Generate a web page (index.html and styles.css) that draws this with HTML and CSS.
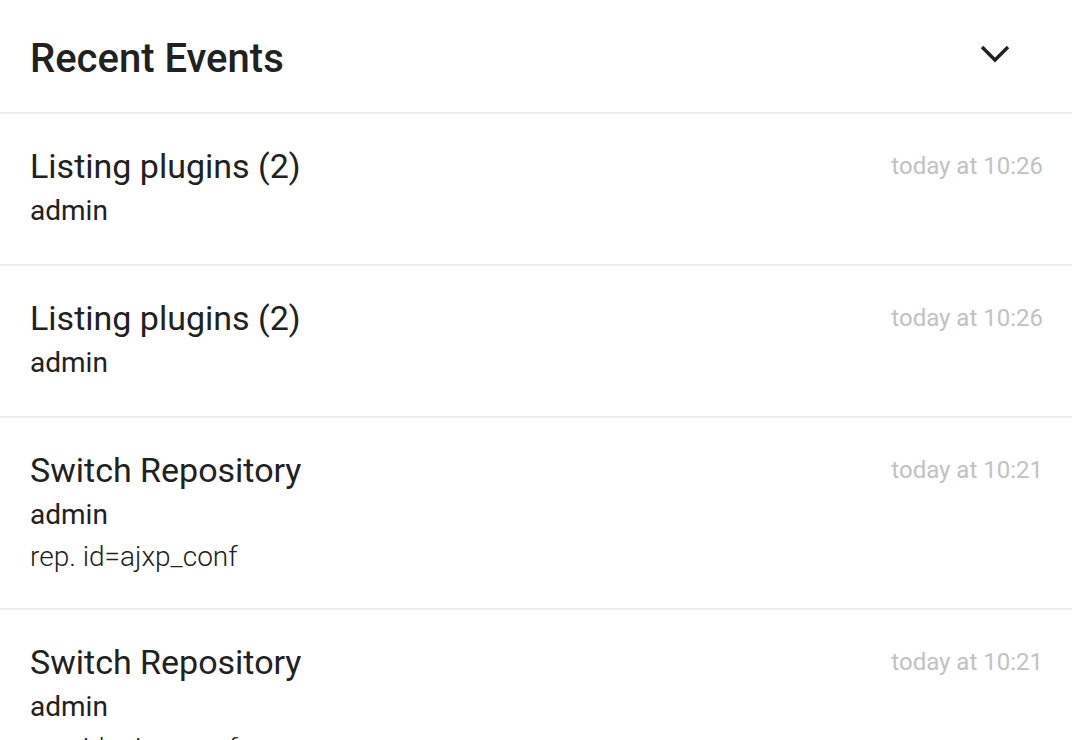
FILE: index.html
```html
<!DOCTYPE html>
<html>
<head>
<meta charset="utf-8">
<link rel="stylesheet" href="styles.css">
</head>
<body>
<div class="card">
  <div class="header">
    <h1 class="title">Recent Events</h1>
    <svg class="chevron" width="32" height="24" viewBox="0 0 32 24"><polyline points="3,5 16,18 29,5" fill="none" stroke="#212121" stroke-width="3.4"/></svg>
  </div>
  <div class="row">
    <div class="main">
      <div class="ev">Listing plugins (2)</div>
      <div class="user">admin</div>
    </div>
    <div class="time">today at 10:26</div>
  </div>
  <div class="row">
    <div class="main">
      <div class="ev">Listing plugins (2)</div>
      <div class="user">admin</div>
    </div>
    <div class="time">today at 10:26</div>
  </div>
  <div class="row">
    <div class="main">
      <div class="ev">Switch Repository</div>
      <div class="user">admin</div>
      <div class="detail">rep. id=ajxp_conf</div>
    </div>
    <div class="time">today at 10:21</div>
  </div>
  <div class="row">
    <div class="main">
      <div class="ev">Switch Repository</div>
      <div class="user">admin</div>
      <div class="detail">rep. id=ajxp_conf</div>
    </div>
    <div class="time">today at 10:21</div>
  </div>
</div>
</body>
</html>
```
FILE: styles.css
```css
html, body {
  margin: 0;
  padding: 0;
  background: #ffffff;
  font-family: Roboto, "Liberation Sans", sans-serif;
  color: #212121;
  overflow: hidden;
}
.card {
  width: 1072px;
}
.header {
  display: flex;
  align-items: center;
  justify-content: space-between;
  padding: 0 61px 0 30px;
  border-bottom: 2px solid #ececec;
  box-sizing: border-box;
  height: 114px;
}
.title {
  margin: 0;
  font-size: 40px;
  font-weight: 500;
  line-height: 44px;
  padding-top: 5px;
}
.chevron {
  display: block;
  margin-top: -5px;
}
.row {
  display: flex;
  justify-content: space-between;
  align-items: flex-start;
  padding: 30px 29px 31px 30px;
  border-bottom: 2px solid #ececec;
}
.ev {
  font-size: 34px;
  line-height: 44px;
}
.user {
  font-size: 28px;
  line-height: 44px;
  padding-top: 1px;
}
.detail {
  font-size: 28px;
  font-weight: 300;
  line-height: 40px;
}
.time {
  font-size: 24px;
  line-height: 44px;
  color: #c2c2c2;
}
```
